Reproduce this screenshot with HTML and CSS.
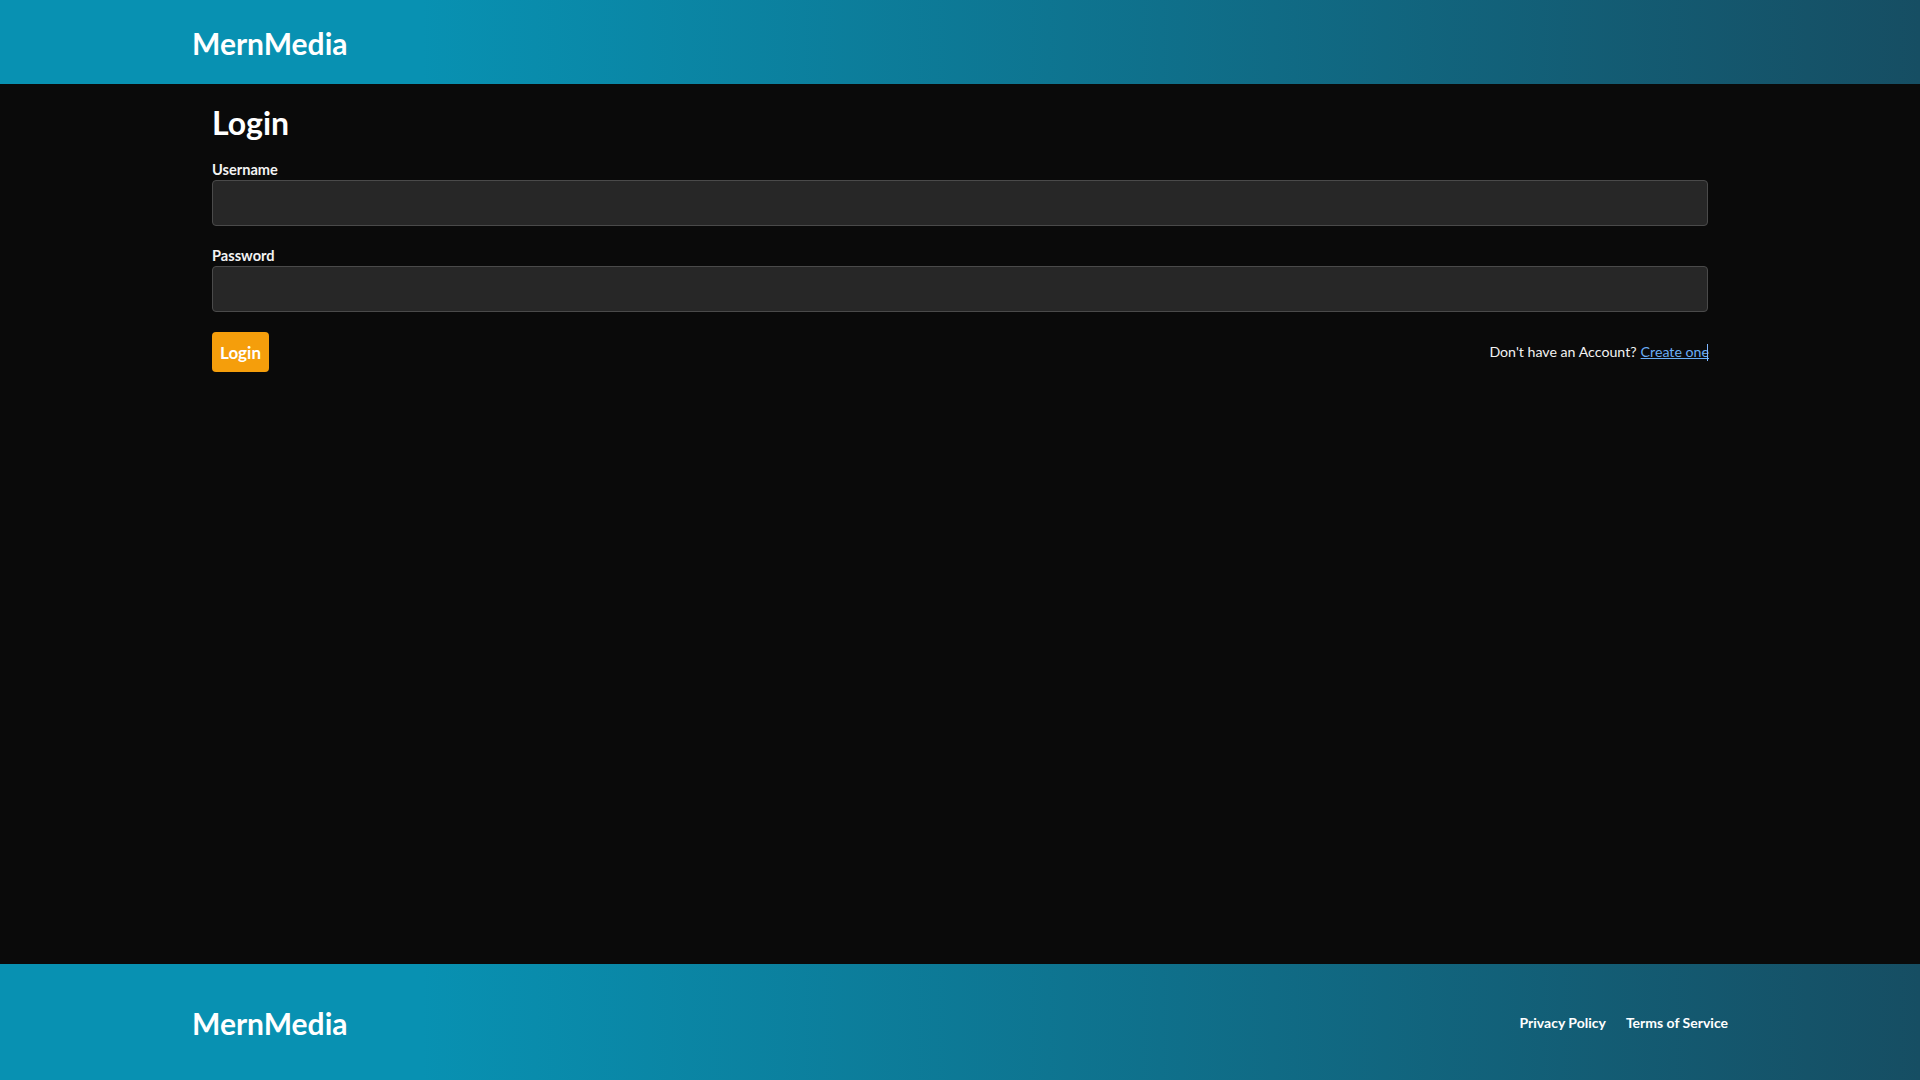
FILE: index.html
```html
<!DOCTYPE html>
<html lang="en">
<head>
<meta charset="utf-8">
<title>MernMedia - Login</title>
<link rel="stylesheet" href="styles.css">
</head>
<body>
<div class="page">
  <header class="site-header">
    <div class="bar-inner">
      <a class="logo" href="#">MernMedia</a>
    </div>
  </header>
  <main class="main">
    <div class="main-inner">
      <h1 class="title">Login</h1>
      <form class="form">
        <div class="field">
          <label class="label" for="username">Username</label>
          <input class="input" id="username" type="text">
        </div>
        <div class="field">
          <label class="label" for="password">Password</label>
          <input class="input" id="password" type="password">
        </div>
        <div class="actions">
          <button class="btn" type="button">Login</button>
          <p class="signup">Don't have an Account? <a class="signup-link" href="#">Create one</a><span class="caret"></span></p>
        </div>
      </form>
    </div>
  </main>
  <footer class="site-footer">
    <div class="bar-inner">
      <a class="logo" href="#">MernMedia</a>
      <nav class="footer-links">
        <a class="footer-link" href="#">Privacy Policy</a>
        <a class="footer-link" href="#">Terms of Service</a>
      </nav>
    </div>
  </footer>
</div>
</body>
</html>
```
FILE: styles.css
```css
* { box-sizing: border-box; }
html, body { margin: 0; padding: 0; height: 100%; }
body {
  background: #0a0a0a;
  color: #ffffff;
  font-family: Lato, "Liberation Sans", sans-serif;
}
.page {
  min-height: 100vh;
  display: flex;
  flex-direction: column;
}
.site-header, .site-footer {
  background: linear-gradient(to right, #0891b2 22%, #164e63 100%);
}
.site-header { height: 84px; display: flex; }
.site-footer { height: 116px; display: flex; }
.bar-inner {
  width: 80%;
  margin: 0 auto;
  display: flex;
  align-items: center;
  justify-content: space-between;
}
.logo {
  color: #ffffff;
  text-decoration: none;
  font-weight: 700;
  font-size: 30px;
  line-height: 1.2;
  padding-top: 2px;
}
.main { flex: 1; }
.main-inner {
  width: 80%;
  margin: 0 auto;
  padding: 20px 20px;
}
.title {
  margin: 0 0 19px;
  font-size: 32px;
  line-height: 38px;
  font-weight: 700;
}
.form { display: flex; flex-direction: column; gap: 21px; }
.field { display: flex; flex-direction: column; }
.label {
  font-size: 14.6px;
  line-height: 18px;
  font-weight: 700;
  color: #f3f3f3;
  margin-bottom: 1px;
}
.input {
  height: 46px;
  background: #272727;
  border: 1px solid #4a4a4a;
  border-radius: 4px;
  color: #fff;
  font-family: inherit;
  font-size: 15px;
  padding: 0 12px;
  outline: none;
}
.actions {
  display: flex;
  align-items: center;
  justify-content: space-between;
  margin-top: -1px;
}
.btn {
  height: 40px;
  padding: 0 8px;
  background: #f59e0b;
  color: #fff;
  border: none;
  border-radius: 4px;
  font-family: inherit;
  font-weight: 700;
  font-size: 17px;
  cursor: pointer;
}
.signup {
  margin: 0;
  font-size: 14.2px;
  line-height: 20px;
  color: #f2f2f2;
  display: flex;
  align-items: center;
}
.signup-link {
  color: #6aaef5;
  text-decoration: underline;
  margin-left: 4px;
}
.caret {
  display: inline-block;
  width: 1px;
  height: 17px;
  background: #7fb6ff;
  margin-left: -2px;
}
.footer-links { display: flex; gap: 20px; }
.footer-link {
  color: #fff;
  text-decoration: none;
  font-weight: 700;
  font-size: 14px;
}
```
